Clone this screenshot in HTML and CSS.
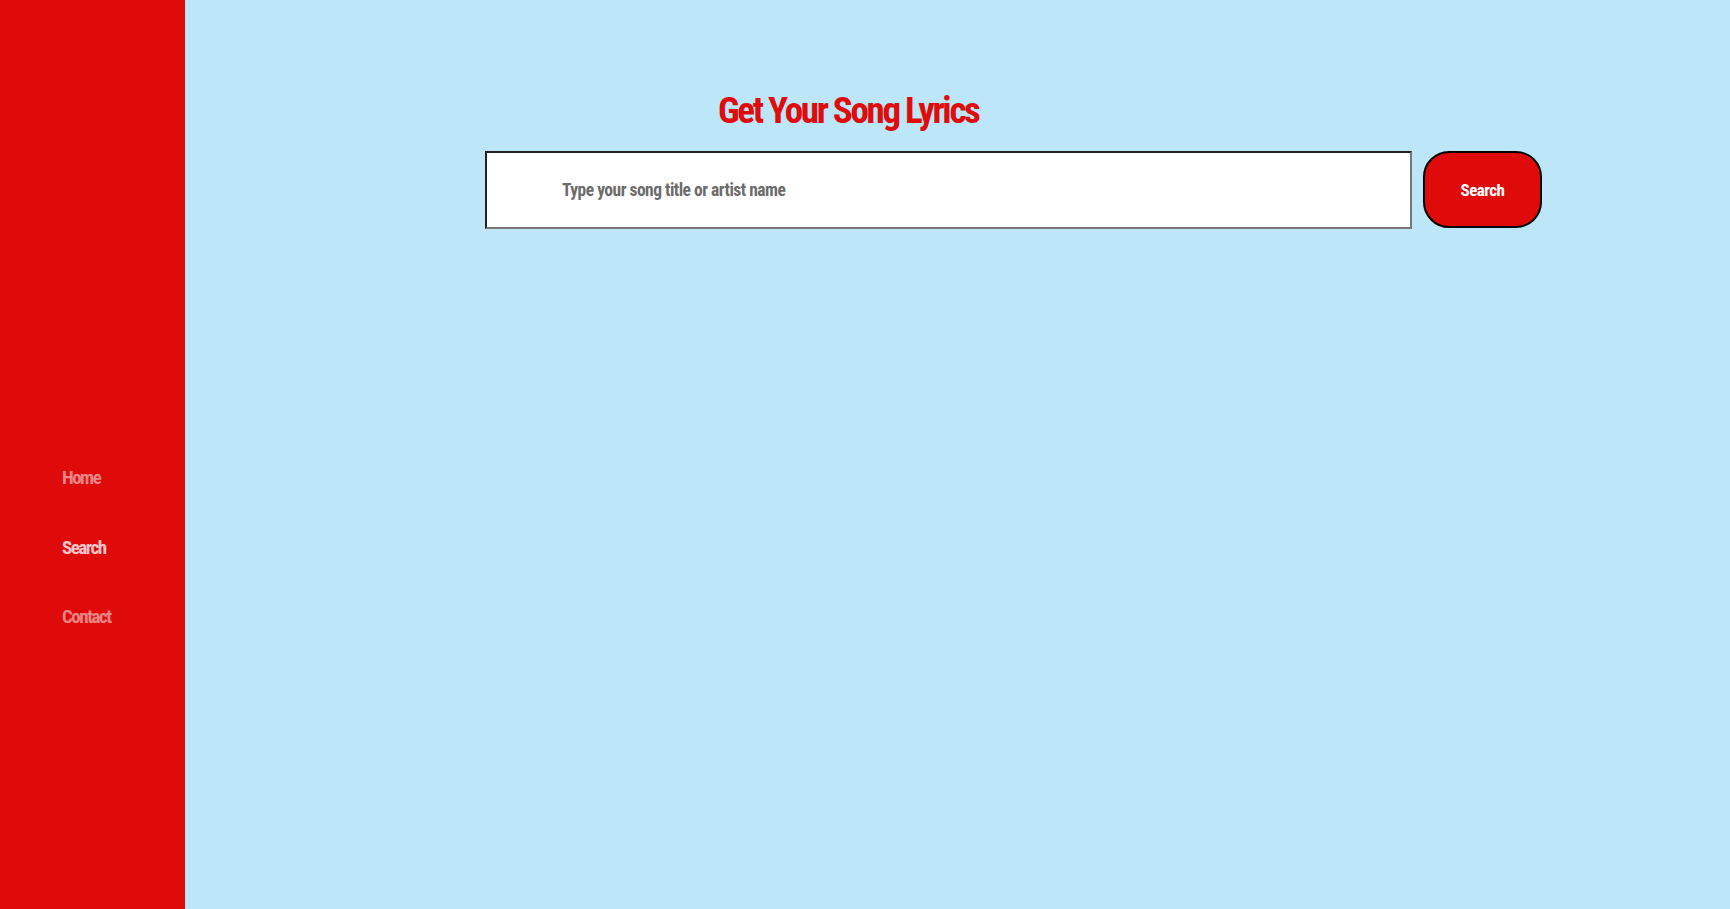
FILE: index.html
```html
<!DOCTYPE html>
<html lang="en">
<head>
<meta charset="utf-8">
<title>Get Your Song Lyrics</title>
<link rel="stylesheet" href="styles.css">
</head>
<body>
<div class="layout">
  <aside class="sidebar">
    <nav class="nav">
      <a class="nav-link" href="#">Home</a>
      <a class="nav-link active" href="#">Search</a>
      <a class="nav-link" href="#">Contact</a>
    </nav>
  </aside>
  <main class="main">
    <div class="content">
      <h1 class="title">Get Your Song Lyrics</h1>
      <form class="search-form">
        <input class="search-input" type="text" placeholder="Type your song title or artist name">
        <button class="search-btn" type="button">Search</button>
      </form>
    </div>
  </main>
</div>
</body>
</html>
```
FILE: styles.css
```css
* { box-sizing: border-box; }
html, body { margin: 0; padding: 0; height: 100%; }
body {
  font-family: "Roboto Condensed", "Open Sans", sans-serif;
  font-weight: 700;
  background: #bde6f9;
}
.layout {
  display: flex;
  min-height: 100vh;
}
.sidebar {
  width: 185px;
  flex-shrink: 0;
  background: #df0b0b;
  padding-top: 468px;
  padding-left: 62px;
}
.nav {
  display: flex;
  flex-direction: column;
  gap: 49.5px;
}
.nav-link {
  font-size: 19px;
  line-height: 20px;
  color: #ef8585;
  text-decoration: none;
  letter-spacing: -1.5px;
}
.nav-link.active { color: #ffc6cb; }
.main {
  flex: 1;
  padding-left: 300px;
  padding-top: 89px;
}
.content {
  width: 1057px;
}
.title {
  margin: 0 0 19px 233px;
  font-size: 37px;
  line-height: 43px;
  font-weight: 700;
  color: #e00b0b;
  letter-spacing: -2.3px;
}
.search-form {
  display: flex;
  gap: 11px;
}
.search-input {
  width: 927px;
  height: 78px;
  border-style: solid;
  border-width: 2px;
  border-color: #222 #777 #777 #222;
  background: #fff;
  padding: 0 0 0 75px;
  font-family: inherit;
  font-weight: 700;
  font-size: 17.5px;
  letter-spacing: -0.5px;
  color: #333;
  outline: none;
}
.search-input::placeholder { color: #6c6c6c; }
.search-btn {
  width: 119px;
  height: 77px;
  border: 2px solid #000;
  border-radius: 26px;
  background: #df0b0b;
  color: #fff;
  font-family: inherit;
  font-weight: 700;
  font-size: 17px;
  letter-spacing: -0.5px;
  padding: 0;
}
```
